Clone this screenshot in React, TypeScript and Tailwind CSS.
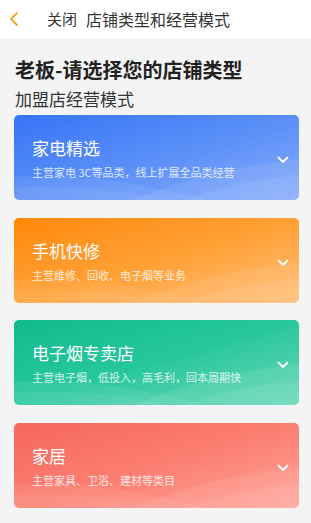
import React from 'react';

const cards = [
  {
    title: '家电精选',
    desc: '主营家电 3C等品类，线上扩展全品类经营',
    bg: 'bg-gradient-to-br from-[#3774f6] via-[#5a8ff8] to-[#86abfb]',
  },
  {
    title: '手机快修',
    desc: '主营维修、回收、电子烟等业务',
    bg: 'bg-gradient-to-br from-[#ff8800] via-[#ffa033] to-[#ffbd72]',
  },
  {
    title: '电子烟专卖店',
    desc: '主营电子烟，低投入，高毛利，回本周期快',
    bg: 'bg-gradient-to-br from-[#0fba8d] via-[#27c79d] to-[#62d8b6]',
  },
  {
    title: '家居',
    desc: '主营家具、卫浴、建材等类目',
    bg: 'bg-gradient-to-br from-[#f5675a] via-[#fb7e71] to-[#ffa399]',
  },
];

function Waves() {
  return (
    <svg className="absolute inset-0 w-full h-full pointer-events-none" viewBox="0 0 285 85" preserveAspectRatio="none">
      <path d="M0 62 C60 58 120 66 190 85 L0 85 Z" fill="white" fillOpacity="0.07" />
      <path d="M0 72 C70 70 120 76 150 85 L0 85 Z" fill="white" fillOpacity="0.06" />
      <path d="M120 85 C170 62 230 50 285 44 L285 85 Z" fill="white" fillOpacity="0.08" />
      <path d="M170 85 C210 70 250 64 285 60 L285 85 Z" fill="white" fillOpacity="0.07" />
    </svg>
  );
}

export default function App() {
  return (
    <div className="w-[311px] h-[523px] bg-[#f4f4f4] overflow-hidden" style={{ fontFamily: '"Noto Sans CJK SC", "Noto Sans", sans-serif' }}>
      {/* Header */}
      <div className="h-[38px] bg-white flex items-center">
        <svg width="12" height="16" viewBox="0 0 12 16" className="ml-[8px]">
          <path d="M9 2 L3 8 L9 14" stroke="#f5a623" strokeWidth="1.8" fill="none" strokeLinecap="round" strokeLinejoin="round" />
        </svg>
        <span className="ml-[27px] text-[15px] text-[#333]">关闭</span>
        <span className="ml-[9px] text-[16px] text-[#333]">店铺类型和经营模式</span>
      </div>

      {/* Body */}
      <div className="px-[14px] pt-[18px]">
        <div className="pl-[1px] text-[20px] leading-[28px] font-bold text-[#222]">老板-请选择您的店铺类型</div>
        <div className="pl-[1px] mt-[3px] text-[17px] leading-[24px] text-[#333]">加盟店经营模式</div>

        <div className="mt-[4px] flex flex-col gap-[17.5px]">
          {cards.map((c) => (
            <div key={c.title} className={`relative h-[85px] w-[285px] rounded-[5px] overflow-hidden ${c.bg}`}>
              <Waves />
              <div className="relative pl-[18px] pt-[21px] text-white">
                <div className="text-[17px] leading-[24px]">{c.title}</div>
                <div className="mt-[4px] text-[11px] leading-[16px] text-white/80">{c.desc}</div>
              </div>
              <svg width="12" height="8" viewBox="0 0 12 8" className="absolute right-[10px] top-[41px]">
                <path d="M1.5 1.5 L6 6 L10.5 1.5" stroke="white" strokeWidth="1.8" fill="none" strokeLinecap="round" strokeLinejoin="round" />
              </svg>
            </div>
          ))}
        </div>
      </div>
    </div>
  );
}
